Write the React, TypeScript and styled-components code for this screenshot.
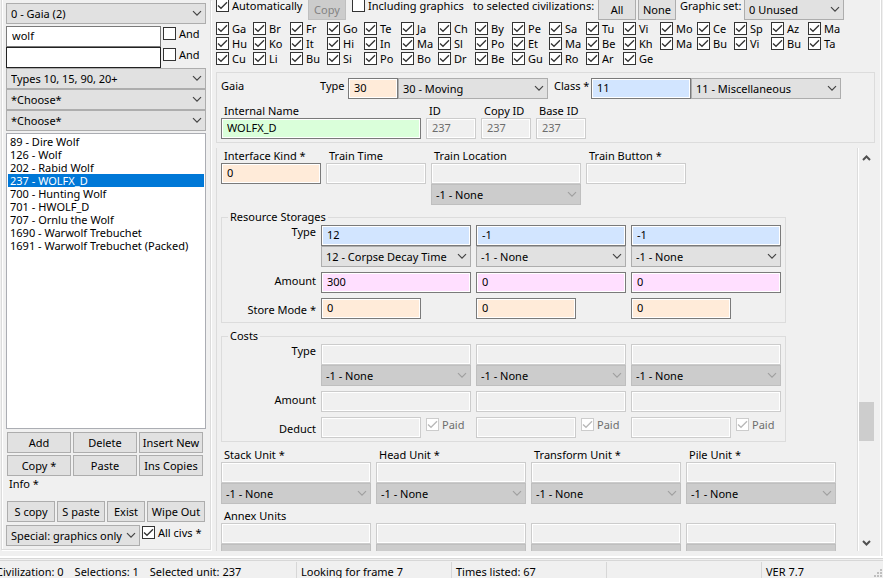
import React, { useId, useState } from "react";
import styled, { createGlobalStyle, css } from "styled-components";

const Global = createGlobalStyle`
  *, *::before, *::after { box-sizing: border-box; }
  html, body { margin: 0; padding: 0; height: 100%; overflow: hidden; }
  #root { height: 100%; }
  body, button, input, select, textarea {
    font-family: "Noto Sans", "Open Sans", sans-serif;
    font-size: 11px;
    line-height: 15px;
    color: #000;
  }
  body { background: #f0f0f0; }
`;

const H = 21;

type Tone = "white" | "orange" | "green" | "blue" | "pink" | "off";
const tones: Record<Tone, string> = {
  white: "#ffffff",
  orange: "#ffebd9",
  green: "#daffda",
  blue: "#d2e5ff",
  pink: "#ffdfff",
  off: "#f0f0f0",
};

const Window = styled.div`
  height: 100vh;
  display: flex;
  flex-direction: column;
  background: #f0f0f0;
  white-space: nowrap;
`;

const Workspace = styled.div`
  flex: 1;
  min-height: 0;
  display: flex;
  gap: 5px;
  padding-right: 1px;
  border-bottom: 2px solid #fff;
`;

const Field = styled.input<{ $tone?: Tone; $w?: number; $dark?: boolean }>`
  height: ${H}px;
  width: ${(p) => (p.$w ? `${p.$w}px` : "100%")};
  min-width: 0;
  padding: 0 5px 2px;
  border: 1px solid ${(p) => (p.$tone === "off" ? "#cccccc" : p.$dark ? "#222222" : "#7a7a7a")};
  border-radius: 0;
  outline: none;
  background: ${(p) => tones[p.$tone ?? "white"]};
  box-shadow: inset 0 0 0 1px #fff;
  &:disabled { color: #6d6d6d; }
`;

const DropBox = styled.span<{ $w?: number }>`
  display: block;
  position: relative;
  width: ${(p) => (p.$w ? `${p.$w}px` : "100%")};
  height: ${H}px;
  svg {
    position: absolute;
    right: 4px;
    top: 7px;
    pointer-events: none;
  }
`;

const NativeSelect = styled.select`
  display: block;
  appearance: none;
  width: 100%;
  height: ${H}px;
  padding: 0 16px 0 4px;
  border: 1px solid #adadad;
  border-radius: 0;
  background: #e1e1e1;
  outline: none;
  &:disabled {
    background: #cccccc;
    border-color: #bfbfbf;
    color: #000;
    opacity: 1;
  }
`;

function Drop({ value, label, w, disabled }: { value: string; label: string; w?: number; disabled?: boolean }) {
  return (
    <DropBox $w={w}>
      <NativeSelect aria-label={label} disabled={disabled} defaultValue={value}>
        <option>{value}</option>
      </NativeSelect>
      <svg width="10" height="7" viewBox="0 0 10 7" fill="none" stroke={disabled ? "#a0a0a0" : "#444"} strokeWidth="1.2">
        <path d="M1 1.2 5 5.2 9 1.2" />
      </svg>
    </DropBox>
  );
}

const Button = styled.button<{ $w?: number }>`
  width: ${(p) => (p.$w ? `${p.$w}px` : "auto")};
  height: ${H}px;
  padding: 0 0 1px;
  border: 1px solid #adadad;
  border-radius: 0;
  background: #e1e1e1;
  &:disabled {
    background: #cccccc;
    border-color: #bfbfbf;
    color: #838383;
  }
`;

const CheckLabel = styled.label<{ $off?: boolean }>`
  display: flex;
  align-items: center;
  gap: 3px;
  height: 13px;
  color: ${(p) => (p.$off ? "#6d6d6d" : "#000")};
`;

const CheckFrame = styled.span`
  position: relative;
  flex: none;
  width: 13px;
  height: 13px;
  svg {
    position: absolute;
    inset: 0;
    pointer-events: none;
  }
`;

const CheckInput = styled.input`
  appearance: none;
  display: block;
  width: 13px;
  height: 13px;
  margin: 0;
  border: 1px solid #333;
  background: #fff;
  &:disabled { border-color: #cccccc; }
`;

function Check({ text, on = false, disabled }: { text: string; on?: boolean; disabled?: boolean }) {
  const [checked, setChecked] = useState(on);
  return (
    <CheckLabel $off={disabled}>
      <CheckFrame>
        <CheckInput type="checkbox" checked={checked} disabled={disabled} onChange={(e) => setChecked(e.target.checked)} />
        {checked && (
          <svg width="13" height="13" viewBox="0 0 13 13" fill="none" stroke={disabled ? "#b8b8b8" : "#333"} strokeWidth="1.3">
            <path d="M2 6.5 5 9.3 11 3.2" />
          </svg>
        )}
      </CheckFrame>
      {text}
    </CheckLabel>
  );
}

/* ---------- left panel ---------- */

const Side = styled.section`
  flex: none;
  width: 210px;
  margin-left: 1px;
  margin-bottom: 6px;
  padding: 3px 4px 3px;
  display: flex;
  flex-direction: column;
  border: 1px solid #dcdcdc;
  border-top: 0;
  box-shadow: inset 1px 0 0 #fff, 1px 1px 0 #fff;
`;

const SearchRow = styled.div`
  display: grid;
  grid-template-columns: 155px 1fr;
  column-gap: 2px;
  & > label { margin-top: 1px; }
`;

const SearchGroup = styled.div`
  padding-top: 2px;
`;

const UnitList = styled.ul`
  flex: 1;
  min-height: 0;
  margin: 2px 0 3px;
  padding: 1px;
  list-style: none;
  overflow: hidden;
  border: 1px solid #abadb3;
  background: #fff;
`;

const UnitItem = styled.li<{ $on?: boolean }>`
  height: 13px;
  line-height: 13px;
  padding-left: 2px;
  ${(p) => p.$on && css`background: #0078d7; color: #fff;`}
`;

const ButtonRow = styled.div<{ $after?: number }>`
  display: flex;
  gap: 2px;
  padding-left: 1px;
  margin-bottom: ${(p) => p.$after ?? 2}px;
`;

const InfoText = styled.div`
  height: 25px;
  padding-left: 3px;
`;

const SpecialRow = styled.div`
  display: flex;
  gap: 2px;
  & > label { margin-top: 1px; }
`;

const units = [
  "89 - Dire Wolf",
  "126 - Wolf",
  "202 - Rabid Wolf",
  "237 - WOLFX_D",
  "700 - Hunting Wolf",
  "701 - HWOLF_D",
  "707 - Ornlu the Wolf",
  "1690 - Warwolf Trebuchet",
  "1691 - Warwolf Trebuchet (Packed)",
];

function SidePanel() {
  return (
    <Side>
      <Drop label="Civilization" value="0 - Gaia (2)" />
      <SearchGroup>
        <SearchRow>
          <Field aria-label="Search" defaultValue="wolf" />
          <Check text="And" />
        </SearchRow>
        <SearchRow>
          <Field aria-label="Second search" $dark />
          <Check text="And" />
        </SearchRow>
      </SearchGroup>
      <Drop label="Unit types" value="Types 10, 15, 90, 20+" />
      <Drop label="First filter" value="*Choose*" />
      <Drop label="Second filter" value="*Choose*" />
      <UnitList>
        {units.map((u) => (
          <UnitItem key={u} $on={u.startsWith("237")}>{u}</UnitItem>
        ))}
      </UnitList>
      <ButtonRow>
        <Button $w={64}>Add</Button>
        <Button $w={64}>Delete</Button>
        <Button $w={64}>Insert New</Button>
      </ButtonRow>
      <ButtonRow $after={0}>
        <Button $w={64}>Copy *</Button>
        <Button $w={64}>Paste</Button>
        <Button $w={64}>Ins Copies</Button>
      </ButtonRow>
      <InfoText>Info *</InfoText>
      <ButtonRow $after={3}>
        <Button $w={48}>S copy</Button>
        <Button $w={48}>S paste</Button>
        <Button $w={38}>Exist</Button>
        <Button $w={58}>Wipe Out</Button>
      </ButtonRow>
      <SpecialRow>
        <Drop label="Special copy" w={134} value="Special: graphics only" />
        <Check text="All civs *" on />
      </SpecialRow>
    </Side>
  );
}

/* ---------- main panel ---------- */

const Main = styled.main`
  flex: 1;
  min-width: 0;
  display: flex;
  flex-direction: column;
  padding: 0 6px 5px 0;
  border-right: 1px solid #dcdcdc;
  box-shadow: inset -1px 0 0 #fff;
`;

const CopyBar = styled.div`
  flex: none;
  display: flex;
  align-items: flex-start;
  height: 21px;
  margin: -1px 0 2px;
`;

const Slot = styled.div<{ $w: number }>`
  flex: none;
  width: ${(p) => p.$w}px;
  line-height: 13px;
`;

const Pair = styled.div`
  display: flex;
  gap: 2px;
`;

const CivGrid = styled.div`
  flex: none;
  display: grid;
  grid-template-columns: repeat(17, 37px);
  row-gap: 2px;
  margin-bottom: 7px;
`;

const Header = styled.section`
  flex: none;
  height: 71px;
  padding: 5px 4px;
  border: 1px solid #dcdcdc;
`;

const HeaderRow = styled.div`
  display: flex;
  height: 21px;
`;

const Caption = styled.label<{ $w: number }>`
  width: ${(p) => p.$w}px;
`;

const FieldRow = styled.div`
  display: flex;
  gap: 5px;
`;

const Column = styled.div<{ $w: number }>`
  flex: none;
  display: flex;
  flex-direction: column;
  width: ${(p) => p.$w}px;
`;

const TopLabel = styled.label`
  height: 15px;
  padding-left: 3px;
`;

const HeaderFields = styled(FieldRow)`
  margin-top: 4px;
`;

function Labelled({ label, w, tone, value, drop, disabled }: {
  label: string; w: number; tone: Tone; value?: string; drop?: boolean; disabled?: boolean;
}) {
  const id = useId();
  return (
    <Column $w={w}>
      <TopLabel htmlFor={id}>{label}</TopLabel>
      <Field id={id} $tone={tone} defaultValue={value} disabled={disabled} />
      {drop && <Drop label={label || "Unit"} value="-1 - None" disabled />}
    </Column>
  );
}

const ScrollArea = styled.div`
  flex: 1;
  min-height: 0;
  margin-top: 5px;
  display: flex;
  border-left: 1px solid #dcdcdc;
`;

const ScrollContent = styled.div`
  flex: 1;
  min-width: 0;
  overflow: hidden;
  padding-left: 4px;
`;

const ScrollBar = styled.div`
  flex: none;
  width: 18px;
  display: flex;
  flex-direction: column;
  align-items: center;
  border-left: 1px solid #dcdcdc;
  box-shadow: inset 1px 0 0 #fff;
  padding: 7px 1px 5px 0;
`;

const Thumb = styled.div`
  width: 15px;
  height: 39px;
  margin: auto 0 99px;
  background: #cdcdcd;
`;

const GroupBox = styled.fieldset<{ $before: number }>`
  width: 565px;
  min-width: 0;
  margin: ${(p) => p.$before}px 0 0;
  padding: 0 4px 3px;
  border: 1px solid #dcdcdc;
`;

const Legend = styled.legend`
  margin-left: 2px;
  padding: 0 2px;
  height: 12px;
  line-height: 11px;
`;

const GroupGrid = styled.div`
  display: grid;
  grid-template-columns: 90px repeat(3, 150px);
  column-gap: 5px;
  row-gap: 5px;
  margin-top: 2px;
`;

const RowLabel = styled.span<{ $drop: number }>`
  text-align: right;
  margin-top: ${(p) => p.$drop}px;
  height: 15px;
`;

const ShortCell = styled.div`
  display: flex;
  gap: 5px;
  & > label { margin-top: 1px; }
`;

const UnitRow = styled(FieldRow)<{ $before: number }>`
  margin-top: ${(p) => p.$before}px;
`;

const kinds = ["12 - Corpse Decay Time", "-1 - None", "-1 - None"];
const typeIds = ["12", "-1", "-1"];
const amounts = ["300", "0", "0"];

const civs = (
  "Ga Br Fr Go Te Ja Ch By Pe Sa Tu Vi Mo Ce Sp Az Ma " +
  "Hu Ko It Hi In Ma Sl Po Et Ma Be Kh Ma Bu Vi Bu Ta " +
  "Cu Li Bu Si Po Bo Dr Be Gu Ro Ar Ge"
).split(" ");

function ResourceGroup() {
  return (
    <GroupBox $before={6}>
      <Legend>Resource Storages</Legend>
      <GroupGrid>
        <RowLabel $drop={-1}>Type</RowLabel>
        {typeIds.map((t, i) => (
          <Column key={i} $w={150}>
            <Field aria-label={`Type ${i + 1}`} $tone="blue" defaultValue={t} />
            <Drop label={`Type name ${i + 1}`} value={kinds[i]} />
          </Column>
        ))}
        <RowLabel $drop={1}>Amount</RowLabel>
        {amounts.map((a, i) => <Field key={i} aria-label={`Amount ${i + 1}`} $tone="pink" defaultValue={a} />)}
        <RowLabel $drop={4}>Store Mode *</RowLabel>
        {amounts.map((_, i) => <Field key={i} aria-label={`Store mode ${i + 1}`} $tone="orange" $w={100} defaultValue="0" />)}
      </GroupGrid>
    </GroupBox>
  );
}

function CostGroup() {
  return (
    <GroupBox $before={7}>
      <Legend>Costs</Legend>
      <GroupGrid>
        <RowLabel $drop={-1}>Type</RowLabel>
        {kinds.map((_, i) => (
          <Column key={i} $w={150}>
            <Field aria-label={`Cost type ${i + 1}`} $tone="off" disabled />
            <Drop label={`Cost type name ${i + 1}`} value="-1 - None" disabled />
          </Column>
        ))}
        <RowLabel $drop={1}>Amount</RowLabel>
        {kinds.map((_, i) => <Field key={i} aria-label={`Cost amount ${i + 1}`} $tone="off" disabled />)}
        <RowLabel $drop={4}>Deduct</RowLabel>
        {kinds.map((_, i) => (
          <ShortCell key={i}>
            <Field aria-label={`Deduct ${i + 1}`} $tone="off" $w={100} disabled />
            <Check text="Paid" on disabled />
          </ShortCell>
        ))}
      </GroupGrid>
    </GroupBox>
  );
}

function MainPanel() {
  return (
    <Main>
      <CopyBar>
        <Slot $w={92}><Check text="Automatically" on /></Slot>
        <Slot $w={44}><Button $w={38} disabled>Copy</Button></Slot>
        <Slot $w={121}><Check text="Including graphics" /></Slot>
        <Slot $w={125}>to selected civilizations:</Slot>
        <Pair>
          <Button $w={38}>All</Button>
          <Button $w={38}>None</Button>
        </Pair>
        <Slot $w={4} />
        <Slot $w={64}>Graphic set:</Slot>
        <Drop label="Graphic set" w={100} value="0 Unused" />
      </CopyBar>
      <CivGrid>
        {civs.map((c, i) => <Check key={i} text={c} on />)}
      </CivGrid>
      <Header>
        <HeaderRow>
          <Caption as="span" $w={99}>Gaia</Caption>
          <Caption htmlFor="type" $w={28}>Type</Caption>
          <Field id="type" $tone="orange" $w={50} defaultValue="30" />
          <Drop label="Type name" w={150} value="30 - Moving" />
          <Slot $w={6} />
          <Caption htmlFor="class" $w={37}>Class *</Caption>
          <Field id="class" $tone="blue" $w={100} defaultValue="11" />
          <Drop label="Class name" w={150} value="11 - Miscellaneous" />
        </HeaderRow>
        <HeaderFields>
          <Labelled label="Internal Name" w={200} tone="green" value="WOLFX_D" />
          <Labelled label="ID" w={50} tone="off" value="237" disabled />
          <Labelled label="Copy ID" w={50} tone="off" value="237" disabled />
          <Labelled label="Base ID" w={50} tone="off" value="237" disabled />
        </HeaderFields>
      </Header>
      <ScrollArea>
        <ScrollContent>
          <FieldRow>
            <Labelled label="Interface Kind *" w={100} tone="orange" value="0" />
            <Labelled label="Train Time" w={100} tone="off" disabled />
            <Labelled label="Train Location" w={150} tone="off" drop disabled />
            <Labelled label="Train Button *" w={100} tone="off" disabled />
          </FieldRow>
          <ResourceGroup />
          <CostGroup />
          <UnitRow $before={5}>
            {["Stack Unit *", "Head Unit *", "Transform Unit *", "Pile Unit *"].map((l) => (
              <Labelled key={l} label={l} w={150} tone="off" drop disabled />
            ))}
          </UnitRow>
          <UnitRow $before={4}>
            {["Annex Units", "", "", ""].map((l, i) => (
              <Labelled key={i} label={l} w={150} tone="off" drop disabled />
            ))}
          </UnitRow>
        </ScrollContent>
        <ScrollBar>
          <svg width="9" height="6" viewBox="0 0 9 6" fill="none" stroke="#505050" strokeWidth="2">
            <path d="M1 5 4.500 1.500 8 5" />
          </svg>
          <Thumb />
          <svg width="9" height="6" viewBox="0 0 9 6" fill="none" stroke="#505050" strokeWidth="2">
            <path d="M1 1 4.500 4.500 8 1" />
          </svg>
        </ScrollBar>
      </ScrollArea>
    </Main>
  );
}

/* ---------- status bar ---------- */

const Status = styled.footer`
  flex: none;
  display: flex;
  align-items: flex-end;
  height: 20px;
  overflow: hidden;
  border-top: 1px solid #d7d7d7;
  box-shadow: inset 0 1px 0 #f0f0f0, inset 0 2px 0 #d7d7d7;
`;

const StatusCell = styled.div<{ $w?: number }>`
  ${(p) => (p.$w ? `flex: none; width: ${p.$w}px;` : "flex: 1;")}
  display: flex;
  height: 16px;
  line-height: 19px;
  padding-left: 4px;
  border-left: 1px solid #d7d7d7;
`;

const FirstCell = styled(StatusCell)`
  margin-left: -9px;
  gap: 11px;
`;

const Grip = styled.svg`
  margin: auto 0 0 auto;
`;

export default function App() {
  return (
    <Window>
      <Global />
      <Workspace>
        <SidePanel />
        <MainPanel />
      </Workspace>
      <Status>
        <FirstCell $w={305}>
          <span>Civilization: 0</span>
          <span>Selections: 1</span>
          <span>Selected unit: 237</span>
        </FirstCell>
        <StatusCell $w={155}>Looking for frame 7</StatusCell>
        <StatusCell $w={155}>Times listed: 67</StatusCell>
        <StatusCell $w={155} />
        <StatusCell>
          VER 7.7
          <Grip width="9" height="9" viewBox="0 0 9 9" fill="#bfbfbf">
            <path d="M6 0h2v2H6zM3 3h2v2H3zM6 3h2v2H6zM0 6h2v2H0zM3 6h2v2H3zM6 6h2v2H6z" />
          </Grip>
        </StatusCell>
      </Status>
    </Window>
  );
}
